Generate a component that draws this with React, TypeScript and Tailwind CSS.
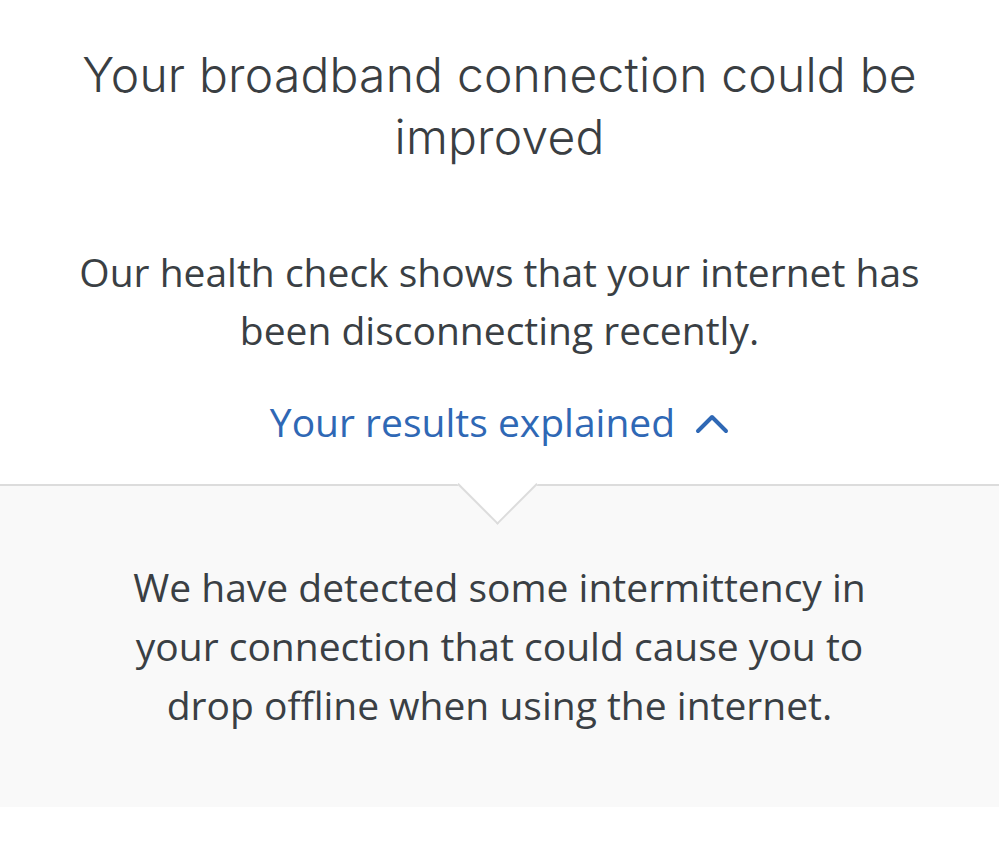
import React from 'react';

const ChevronUp: React.FC = () => (
  <svg width="34" height="22" viewBox="0 0 34 22" fill="none" className="inline-block ml-5 mb-2">
    <path d="M3 19 L17 5 L31 19" stroke="#2f68b5" strokeWidth="4" strokeLinecap="round" strokeLinejoin="round" />
  </svg>
);

export default function App() {
  return (
    <div className="w-[999px] h-[845px] bg-white overflow-hidden">
      <section className="pt-[44px] px-10 text-center">
        <h1
          className="text-[48px] leading-[62px] font-light text-[#3a3e42] tracking-[0.2px]"
          style={{ fontFamily: 'Inter, "Liberation Sans", sans-serif' }}
        >
          Your broadband connection could be improved
        </h1>
        <p
          className="mt-[75px] text-[39px] leading-[58px] text-[#3a3f44] px-6"
          style={{ fontFamily: '"Open Sans", sans-serif' }}
        >
          Our health check shows that your internet has been disconnecting recently.
        </p>
        <button
          className="mt-[41px] text-[39px] leading-[44px] text-[#2f68b5]"
          style={{ fontFamily: '"Open Sans", sans-serif' }}
        >
          Your results explained
          <ChevronUp />
        </button>
      </section>

      <section className="relative mt-[40px] border-t-2 border-[#dcdcdc] bg-[#f9f9f9] h-[323px]">
        <div className="absolute left-[469px] top-[-30px] w-[57px] h-[57px] rotate-45 bg-white border-r-2 border-b-2 border-[#dcdcdc]" />
        <p
          className="pt-[71px] px-32 text-center text-[39px] leading-[59px] text-[#3a3f44]"
          style={{ fontFamily: '"Open Sans", sans-serif' }}
        >
          We have detected some intermittency in your connection that could cause you to drop offline when using the internet.
        </p>
      </section>
    </div>
  );
}
